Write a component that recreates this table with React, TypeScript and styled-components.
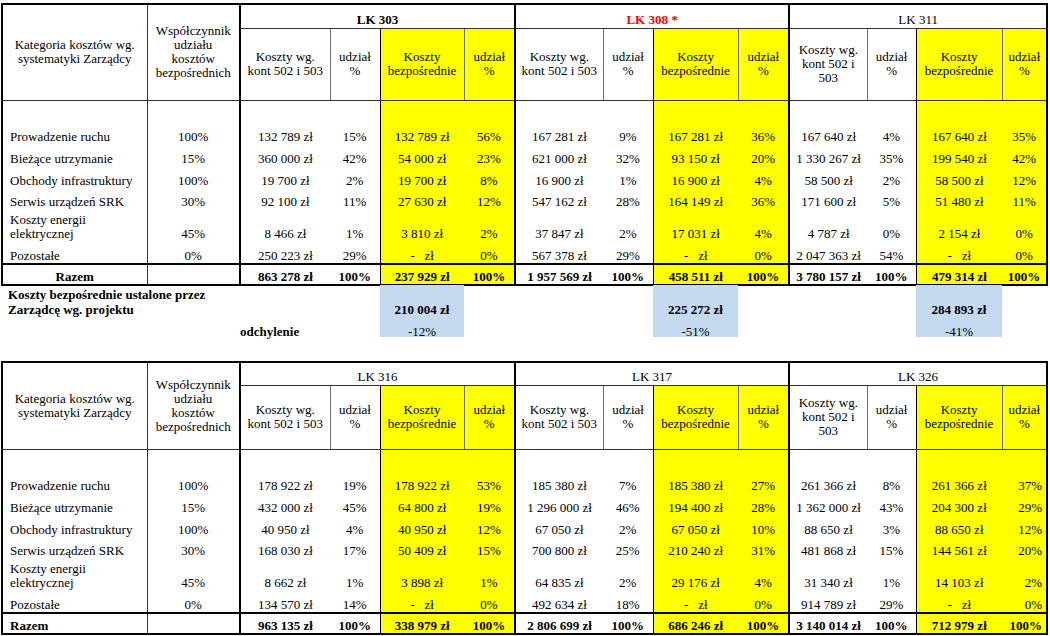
import React from "react";
import styled, { createGlobalStyle } from "styled-components";

const SERIF = `"Liberation Serif", "Times New Roman", Times, serif`;

const GlobalStyle = createGlobalStyle`
  html, body { margin: 0; padding: 0; background: #fff; }
  body {
    font-family: ${SERIF};
    font-size: 13px;
    color: #000;
  }
`;

const COLS = [145, 93, 90, 50, 84, 51, 88, 50, 85, 51, 78, 49, 86, 45];

type Edge = "none" | "dark" | "gray" | "thin" | "thick";
type Tone = "bold" | "red" | "plain";
type Align = "left" | "center" | "right";
type Quad = [string, string, string, string];

interface LineGroup {
  title: string;
  tone: Tone;
  kont: string[];
  rows: Quad[];
  total: Quad;
}

interface TableData {
  groups: LineGroup[];
  headHeights: [number, number];
  totalAlign: Align;
  lastAlign: Align;
}

const edge = (e: Edge = "none") =>
  e === "thick"
    ? "2px solid #000"
    : e === "thin"
    ? "1px solid #000"
    : e === "dark"
    ? "1px solid #333"
    : e === "gray"
    ? "1px solid #6f6f6f"
    : "none";

const BODY_EDGES: Edge[] = ["thick", "none", "thin", "none"];
const HEAD_EDGES: Edge[] = ["thick", "gray", "thin", "gray"];

const BODY = [
  { label: ["Prowadzenie ruchu"], coef: "100%", h: 22, pb: 4 },
  { label: ["Bieżące utrzymanie"], coef: "15%", h: 22, pb: 4 },
  { label: ["Obchody infrastruktury"], coef: "100%", h: 21, pb: 3 },
  { label: ["Serwis urządzeń SRK"], coef: "30%", h: 22, pb: 4 },
  { label: ["Koszty energii", "elektrycznej"], coef: "45%", h: 31, pb: 5 },
  { label: ["Pozostałe"], coef: "0%", h: 18, pb: 0 },
];

const DASH = "-   zł";

const TOP: TableData = {
  headHeights: [24, 72],
  totalAlign: "center",
  lastAlign: "center",
  groups: [
    {
      title: "LK 303",
      tone: "bold",
      kont: ["Koszty wg.", "kont 502 i 503"],
      rows: [
        ["132 789 zł", "15%", "132 789 zł", "56%"],
        ["360 000 zł", "42%", "54 000 zł", "23%"],
        ["19 700 zł", "2%", "19 700 zł", "8%"],
        ["92 100 zł", "11%", "27 630 zł", "12%"],
        ["8 466 zł", "1%", "3 810 zł", "2%"],
        ["250 223 zł", "29%", DASH, "0%"],
      ],
      total: ["863 278 zł", "100%", "237 929 zł", "100%"],
    },
    {
      title: "LK 308 *",
      tone: "red",
      kont: ["Koszty wg.", "kont 502 i 503"],
      rows: [
        ["167 281 zł", "9%", "167 281 zł", "36%"],
        ["621 000 zł", "32%", "93 150 zł", "20%"],
        ["16 900 zł", "1%", "16 900 zł", "4%"],
        ["547 162 zł", "28%", "164 149 zł", "36%"],
        ["37 847 zł", "2%", "17 031 zł", "4%"],
        ["567 378 zł", "29%", DASH, "0%"],
      ],
      total: ["1 957 569 zł", "100%", "458 511 zł", "100%"],
    },
    {
      title: "LK 311",
      tone: "plain",
      kont: ["Koszty wg.", "kont 502 i", "503"],
      rows: [
        ["167 640 zł", "4%", "167 640 zł", "35%"],
        ["1 330 267 zł", "35%", "199 540 zł", "42%"],
        ["58 500 zł", "2%", "58 500 zł", "12%"],
        ["171 600 zł", "5%", "51 480 zł", "11%"],
        ["4 787 zł", "0%", "2 154 zł", "0%"],
        ["2 047 363 zł", "54%", DASH, "0%"],
      ],
      total: ["3 780 157 zł", "100%", "479 314 zł", "100%"],
    },
  ],
};

const BOTTOM: TableData = {
  headHeights: [23, 64],
  totalAlign: "left",
  lastAlign: "right",
  groups: [
    {
      title: "LK 316",
      tone: "plain",
      kont: ["Koszty wg.", "kont 502 i 503"],
      rows: [
        ["178 922 zł", "19%", "178 922 zł", "53%"],
        ["432 000 zł", "45%", "64 800 zł", "19%"],
        ["40 950 zł", "4%", "40 950 zł", "12%"],
        ["168 030 zł", "17%", "50 409 zł", "15%"],
        ["8 662 zł", "1%", "3 898 zł", "1%"],
        ["134 570 zł", "14%", DASH, "0%"],
      ],
      total: ["963 135 zł", "100%", "338 979 zł", "100%"],
    },
    {
      title: "LK 317",
      tone: "plain",
      kont: ["Koszty wg.", "kont 502 i 503"],
      rows: [
        ["185 380 zł", "7%", "185 380 zł", "27%"],
        ["1 296 000 zł", "46%", "194 400 zł", "28%"],
        ["67 050 zł", "2%", "67 050 zł", "10%"],
        ["700 800 zł", "25%", "210 240 zł", "31%"],
        ["64 835 zł", "2%", "29 176 zł", "4%"],
        ["492 634 zł", "18%", DASH, "0%"],
      ],
      total: ["2 806 699 zł", "100%", "686 246 zł", "100%"],
    },
    {
      title: "LK 326",
      tone: "plain",
      kont: ["Koszty wg.", "kont 502 i", "503"],
      rows: [
        ["261 366 zł", "8%", "261 366 zł", "37%"],
        ["1 362 000 zł", "43%", "204 300 zł", "29%"],
        ["88 650 zł", "3%", "88 650 zł", "12%"],
        ["481 868 zł", "15%", "144 561 zł", "20%"],
        ["31 340 zł", "1%", "14 103 zł", "2%"],
        ["914 789 zł", "29%", DASH, "0%"],
      ],
      total: ["3 140 014 zł", "100%", "712 979 zł", "100%"],
    },
  ],
};

const PLANS = [
  { col: 5, amount: "210 004 zł", deviation: "-12%" },
  { col: 9, amount: "225 272 zł", deviation: "-51%" },
  { col: 13, amount: "284 893 zł", deviation: "-41%" },
];

/* ---------- styled parts ---------- */

const Sheet = styled.div`
  width: 1050px;
  padding: 3px 0 0 1px;
  box-sizing: border-box;
  font-family: ${SERIF};
  font-size: 13px;
`;

const Table = styled.table`
  border-collapse: collapse;
  table-layout: fixed;
  width: 1045px;
  border: 2px solid #000;
  font-family: ${SERIF};
  font-size: 13px;
  color: #000;
`;

const Col = styled.col<{ $w: number }>`
  width: ${(p) => p.$w}px;
`;

const Row = styled.tr<{ $h: number }>`
  height: ${(p) => p.$h}px;
`;

const CornerHead = styled.th<{ $left?: Edge }>`
  border-left: ${(p) => edge(p.$left)};
  border-bottom: 1px solid #333;
  font-weight: 400;
  text-align: center;
  vertical-align: middle;
  line-height: 14px;
  padding: 0 2px;
`;

const GroupTitle = styled.th<{ $tone: Tone }>`
  border-left: 2px solid #000;
  border-bottom: 1px solid #333;
  font-weight: ${(p) => (p.$tone === "plain" ? 400 : 700)};
  color: ${(p) => (p.$tone === "red" ? "#ff0000" : "#000")};
  text-align: center;
  vertical-align: bottom;
  line-height: 14px;
  padding: 0 2px 1px;
`;

const ColHead = styled.th<{ $left: Edge; $fill?: boolean }>`
  border-left: ${(p) => edge(p.$left)};
  border-bottom: 1px solid #333;
  background: ${(p) => (p.$fill ? "#ffff00" : "#fff")};
  font-weight: 400;
  text-align: center;
  vertical-align: middle;
  line-height: 14px;
  padding: 0 2px;
`;

const Cell = styled.td<{
  $left?: Edge;
  $fill?: boolean;
  $align?: Align;
  $pb?: number;
  $bold?: boolean;
  $top?: boolean;
}>`
  border-left: ${(p) => edge(p.$left)};
  border-top: ${(p) => (p.$top ? "2px solid #000" : "none")};
  background: ${(p) => (p.$fill ? "#ffff00" : "#fff")};
  text-align: ${(p) => p.$align ?? "center"};
  font-weight: ${(p) => (p.$bold ? 700 : 400)};
  vertical-align: bottom;
  line-height: 14px;
  white-space: pre;
  padding: 0 ${(p) => (p.$align === "right" ? "4px" : "2px")} ${(p) => p.$pb ?? 0}px
    ${(p) => (p.$align === "left" ? "7px" : "2px")};
`;

const Summary = styled.div`
  display: grid;
  grid-template-columns: ${COLS.map((c) => `${c}px`).join(" ")};
  grid-template-rows: 37px 15px;
  margin: -1px 0 24px 1px;
`;

const ProjectLabel = styled.div`
  grid-column: 1 / span 3;
  grid-row: 1;
  padding: 2px 0 0 6px;
  line-height: 15px;
  font-weight: 700;
`;

const DeviationLabel = styled.div`
  grid-column: 3;
  grid-row: 2;
  padding: 2px 0 0 0;
  line-height: 15px;
  font-weight: 700;
`;

const PlanBox = styled.div<{ $col: number }>`
  grid-column: ${(p) => p.$col};
  grid-row: 1 / span 2;
  background: #c5d9f1;
  display: flex;
  flex-direction: column;
  align-items: center;
`;

const PlanAmount = styled.span`
  margin-top: 17px;
  line-height: 15px;
  font-weight: 700;
`;

const PlanDeviation = styled.span`
  margin-top: 7px;
  line-height: 15px;
`;

/* ---------- components ---------- */

const Lines = ({ lines }: { lines: string[] }) => (
  <>
    {lines.map((l, i) => (
      <React.Fragment key={i}>
        {i > 0 && <br />}
        {l}
      </React.Fragment>
    ))}
  </>
);

function CostTable({ data }: { data: TableData }) {
  const { groups } = data;
  const lastIndex = groups.length * 4 - 1;
  const alignFor = (gi: number, k: number): Align =>
    gi * 4 + k === lastIndex ? data.lastAlign : "center";

  return (
    <Table>
      <colgroup>
        {COLS.map((w, i) => (
          <Col key={i} $w={w} />
        ))}
      </colgroup>
      <thead>
        <Row $h={data.headHeights[0]}>
          <CornerHead rowSpan={2}>
            <Lines lines={["Kategoria kosztów wg.", "systematyki Zarządcy"]} />
          </CornerHead>
          <CornerHead rowSpan={2} $left="dark">
            <Lines lines={["Współczynnik", "udziału", "kosztów", "bezpośrednich"]} />
          </CornerHead>
          {groups.map((g) => (
            <GroupTitle key={g.title} colSpan={4} $tone={g.tone}>
              {g.title}
            </GroupTitle>
          ))}
        </Row>
        <Row $h={data.headHeights[1]}>
          {groups.map((g) => (
            <React.Fragment key={g.title}>
              <ColHead $left={HEAD_EDGES[0]}>
                <Lines lines={g.kont} />
              </ColHead>
              <ColHead $left={HEAD_EDGES[1]}>
                <Lines lines={["udział", "%"]} />
              </ColHead>
              <ColHead $left={HEAD_EDGES[2]} $fill>
                <Lines lines={["Koszty", "bezpośrednie"]} />
              </ColHead>
              <ColHead $left={HEAD_EDGES[3]} $fill>
                <Lines lines={["udział", "%"]} />
              </ColHead>
            </React.Fragment>
          ))}
        </Row>
      </thead>
      <tbody>
        <Row $h={26}>
          <Cell />
          <Cell $left="dark" />
          {groups.map((g) =>
            BODY_EDGES.map((e, k) => <Cell key={g.title + k} $left={e} $fill={k >= 2} />)
          )}
        </Row>
        {BODY.map((r, ri) => (
          <Row key={ri} $h={r.h}>
            <Cell $align="left" $pb={r.pb}>
              <Lines lines={r.label} />
            </Cell>
            <Cell $left="dark" $pb={r.pb}>
              {r.coef}
            </Cell>
            {groups.map((g, gi) =>
              g.rows[ri].map((v, k) => (
                <Cell
                  key={g.title + k}
                  $left={BODY_EDGES[k]}
                  $fill={k >= 2}
                  $pb={r.pb}
                  $align={alignFor(gi, k)}
                >
                  {v}
                </Cell>
              ))
            )}
          </Row>
        ))}
        <Row $h={21}>
          <Cell $top $bold $align={data.totalAlign}>
            Razem
          </Cell>
          <Cell $top $left="dark" />
          {groups.map((g, gi) =>
            g.total.map((v, k) => (
              <Cell
                key={g.title + k}
                $top
                $bold
                $left={BODY_EDGES[k]}
                $fill={k >= 2}
                $align={alignFor(gi, k)}
              >
                {v}
              </Cell>
            ))
          )}
        </Row>
      </tbody>
    </Table>
  );
}

function ProjectSummary() {
  return (
    <Summary>
      <ProjectLabel>
        <Lines lines={["Koszty bezpośrednie ustalone przez", "Zarządcę wg. projektu"]} />
      </ProjectLabel>
      <DeviationLabel>odchylenie</DeviationLabel>
      {PLANS.map((p) => (
        <PlanBox key={p.col} $col={p.col}>
          <PlanAmount>{p.amount}</PlanAmount>
          <PlanDeviation>{p.deviation}</PlanDeviation>
        </PlanBox>
      ))}
    </Summary>
  );
}

export default function App() {
  return (
    <>
      <GlobalStyle />
      <Sheet>
        <CostTable data={TOP} />
        <ProjectSummary />
        <CostTable data={BOTTOM} />
      </Sheet>
    </>
  );
}
